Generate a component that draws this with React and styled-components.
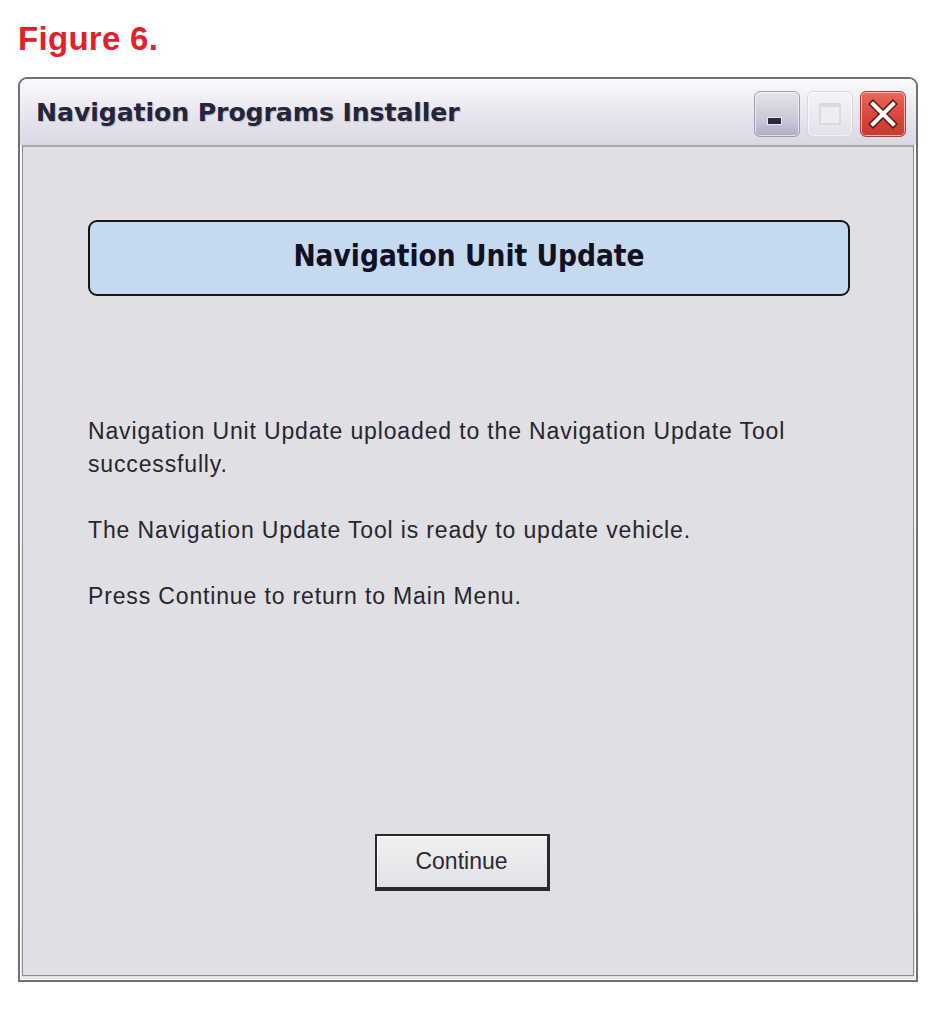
import styled, { createGlobalStyle } from 'styled-components';

const GlobalStyle = createGlobalStyle`
  html, body {
    margin: 0;
    padding: 0;
    background: #ffffff;
  }
  body {
    font-family: "Liberation Sans", Arial, sans-serif;
  }
`;

const App = () => {
  return (
    <Page>
      <GlobalStyle />
      <FigureLabel>Figure 6.</FigureLabel>
      <Window>
        <TitleBar>
          <Title>Navigation Programs Installer</Title>
          <Controls>
            <CtrlButton kind="min">
              <MinGlyph />
            </CtrlButton>
            <CtrlButton kind="max">
              <MaxGlyph />
            </CtrlButton>
            <CtrlButton kind="close">
              <svg width="34" height="34" viewBox="0 0 34 34">
                <path d="M7 7 L27 27 M27 7 L7 27" stroke="#5a1a14" strokeWidth="7" strokeLinecap="square" />
                <path d="M7 7 L27 27 M27 7 L7 27" stroke="#ffffff" strokeWidth="4" strokeLinecap="square" />
              </svg>
            </CtrlButton>
          </Controls>
        </TitleBar>
        <Content>
          <Banner>Navigation Unit Update</Banner>
          <Message>
            <p>
              Navigation Unit Update uploaded to the Navigation Update Tool
              <br />
              successfully.
            </p>
            <p>The Navigation Update Tool is ready to update vehicle.</p>
            <p>Press Continue to return to Main Menu.</p>
          </Message>
          <ContinueButton>Continue</ContinueButton>
        </Content>
      </Window>
    </Page>
  );
};

const Page = styled.div`
  width: 948px;
  height: 1015px;
  padding: 20px 0 0 18px;
  box-sizing: border-box;
`;

const FigureLabel = styled.div`
  font-family: "Liberation Sans", Arial, sans-serif;
  font-weight: bold;
  font-size: 33px;
  line-height: 38px;
  color: #e3202b;
  letter-spacing: 0.3px;
`;

const Window = styled.div`
  margin-top: 19px;
  width: 900px;
  height: 905px;
  box-sizing: border-box;
  display: flex;
  flex-direction: column;
  border: 2px solid #6f6f74;
  border-radius: 9px 9px 0 0;
  background: linear-gradient(#f6f6fa, #e4e4ea);
  box-shadow: inset 0 0 0 1px #ffffff;
`;

const TitleBar = styled.div`
  height: 62px;
  display: flex;
  align-items: center;
  justify-content: space-between;
  padding: 0 10px 4px 16px;
  background: linear-gradient(#fafafd 0%, #ecebf2 40%, #d9d8e2 100%);
  border-radius: 7px 7px 0 0;
`;

const Title = styled.div`
  font-family: "DejaVu Sans", Tahoma, sans-serif;
  font-weight: bold;
  font-size: 25.2px;
  color: #24243a;
  letter-spacing: -0.1px;
  text-shadow: 1px 1px 1px #b8b8c8;
  margin-top: 4px;
`;

const Controls = styled.div`
  display: flex;
  gap: 7px;
  margin-top: 8px;
`;

const CtrlButton = styled.div`
  width: 46px;
  height: 46px;
  box-sizing: border-box;
  border-radius: 6px;
  display: flex;
  align-items: center;
  justify-content: center;
  border: 1px solid ${(p) => (p.kind === 'close' ? '#b03a2e' : p.kind === 'max' ? '#d8d8e0' : '#9c9cb0')};
  background: ${(p) =>
    p.kind === 'close'
      ? 'linear-gradient(#e86a5c, #d6443a 60%, #c83a30)'
      : p.kind === 'max'
      ? 'linear-gradient(#f4f4f8, #e2e2ea)'
      : 'linear-gradient(#e6e6ee, #c4c4d4 70%, #aeaec2)'};
  box-shadow: inset 0 0 0 1px rgba(255, 255, 255, 0.6);
`;

const MinGlyph = styled.div`
  width: 13px;
  height: 6px;
  background: #2a2a3a;
  border: 1px solid #e8e8f0;
  margin-top: 14px;
  margin-right: 6px;
`;

const MaxGlyph = styled.div`
  width: 22px;
  height: 22px;
  box-sizing: border-box;
  border: 2px solid #dadae0;
  border-top-width: 4px;
  background: #eeeef2;
`;

const Content = styled.div`
  flex: 1;
  margin: 0 2px 4px 2px;
  border: 1px solid #8c8c94;
  border-top: 2px solid #a8a8b0;
  background: #dfdfe4;
  display: flex;
  flex-direction: column;
  padding: 73px 63px 0 65px;
`;

const Banner = styled.div`
  height: 76px;
  box-sizing: border-box;
  border: 2px solid #15151a;
  border-radius: 9px;
  background: #c5d9f1;
  display: flex;
  align-items: center;
  justify-content: center;
  font-family: "DejaVu Sans Condensed", "Liberation Sans", sans-serif;
  font-weight: bold;
  font-size: 29.5px;
  color: #111122;
  padding-bottom: 4px;
`;

const Message = styled.div`
  margin-top: 119px;
  font-family: "Liberation Sans", Arial, sans-serif;
  font-size: 23px;
  letter-spacing: 0.85px;
  line-height: 33px;
  color: #26262e;
  p {
    margin: 0 0 33px;
  }
`;

const ContinueButton = styled.div`
  align-self: center;
  margin: auto 0 84px -14px;
  width: 175px;
  height: 57px;
  box-sizing: border-box;
  border: 2px solid #2a2a2e;
  border-bottom-width: 4px;
  border-right-width: 3px;
  background: linear-gradient(#f0f0f2, #e2e2e6);
  box-shadow: inset 1px 1px 0 #ffffff;
  display: flex;
  align-items: center;
  justify-content: center;
  font-family: "Liberation Sans", Arial, sans-serif;
  font-size: 23px;
  color: #2a2a34;
`;

export default App;
